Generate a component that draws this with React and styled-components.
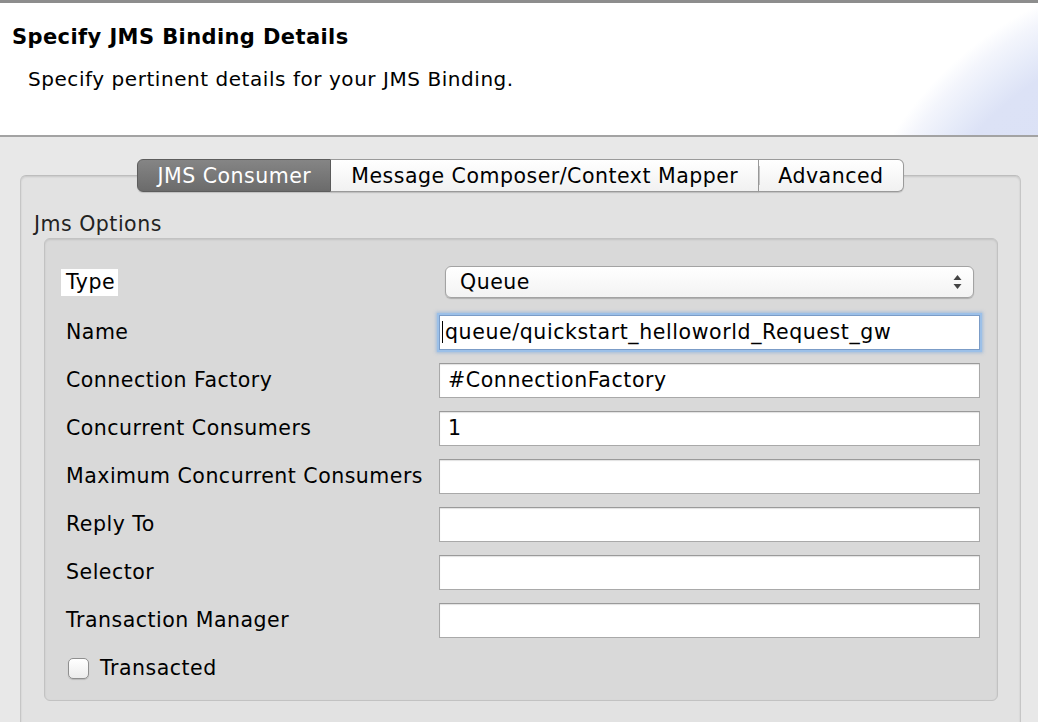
import React from 'react';
import styled, { createGlobalStyle } from 'styled-components';

const GlobalStyle = createGlobalStyle`
  html, body {
    margin: 0;
    padding: 0;
    background: #e8e8e8;
    font-family: "DejaVu Sans", "Liberation Sans", sans-serif;
    color: #000;
    overflow: hidden;
  }
`;

const Page = styled.div`
  width: 1038px;
  height: 722px;
  overflow: hidden;
`;

const Header = styled.div`
  height: 132px;
  border-top: 3px solid #8d8d8d;
  border-bottom: 2px solid #a3a3a3;
  background:
    radial-gradient(circle at 1200px 330px, #d9e0f5 0, #dce2f6 300px, #e6ebf9 322px, #f3f5fc 348px, #ffffff 366px);
  display: flex;
  flex-direction: column;
`;

const Title = styled.h1`
  margin: 0;
  padding: 21px 0 0 12px;
  font-size: 21px;
  letter-spacing: 0.4px;
  line-height: 26px;
  font-weight: bold;
`;

const Subtitle = styled.p`
  margin: 0;
  padding: 17px 0 0 28px;
  font-size: 20px;
  letter-spacing: 0.55px;
  line-height: 24px;
`;

const Body = styled.div`
  padding: 22px 17px 0 20px;
`;

const TabBar = styled.div`
  display: flex;
  justify-content: center;
  position: relative;
  z-index: 1;
  margin-bottom: -17px;
`;

const Tab = styled.div`
  height: 31px;
  padding: 0 ${p => (p.$wide ? '20px' : '19px')};
  display: flex;
  align-items: center;
  font-size: 20.5px;
  letter-spacing: 0.5px;
  border: 1px solid ${p => (p.$active ? '#5d5d5d' : '#9a9a9a')};
  border-left-width: ${p => (p.$first ? '1px' : '0')};
  color: ${p => (p.$active ? '#fff' : '#000')};
  background: ${p =>
    p.$active
      ? 'linear-gradient(#858585, #6b6b6b)'
      : 'linear-gradient(#ffffff, #f1f1f1)'};
  box-shadow: 0 1px 1px rgba(0, 0, 0, 0.15);
  border-radius: ${p => (p.$first ? '6px 0 0 6px' : p.$last ? '0 6px 6px 0' : '0')};
  position: relative;

  ${p =>
    p.$divider &&
    `&::before {
      content: '';
      position: absolute;
      left: 0;
      top: 6px;
      bottom: 6px;
      width: 1px;
      background: #c4c4c4;
    }`}
`;

const Folder = styled.div`
  background: #e2e2e2;
  border: 1px solid #c6c6c6;
  border-top-color: #bdbdbd;
  border-radius: 6px;
  box-shadow: inset 0 1px 2px rgba(0, 0, 0, 0.12);
  padding: 36px 22px 20px 23px;
  height: 600px;
`;

const GroupLabel = styled.div`
  font-size: 20.5px;
  letter-spacing: 0.5px;
  line-height: 24px;
  color: #222;
  margin-left: -10px;
  margin-bottom: 2px;
`;

const Group = styled.div`
  background: #d9d9d9;
  border: 1px solid #c2c2c2;
  border-radius: 6px;
  box-shadow: inset 0 1px 2px rgba(0, 0, 0, 0.1);
  padding: 19px 17px 8px 21px;
`;

const Row = styled.div`
  height: 48px;
  display: grid;
  grid-template-columns: 373px 1fr;
  align-items: center;
  margin-bottom: ${p => (p.$gap ? '2px' : '0')};
`;

const Label = styled.span`
  font-size: 20.5px;
  letter-spacing: 0.5px;
  line-height: 27px;
  justify-self: start;
  white-space: nowrap;
  margin-left: ${p => (p.$highlight ? '-5px' : '0')};
  padding: ${p => (p.$highlight ? '0 3px 0 5px' : '0')};
  background: ${p => (p.$highlight ? '#ffffff' : 'transparent')};
`;

const Select = styled.div`
  margin: 0 6px;
  height: 30px;
  border: 1px solid #a3a3a3;
  border-radius: 6px;
  background: linear-gradient(#ffffff, #f3f3f3);
  box-shadow: 0 1px 1px rgba(0, 0, 0, 0.2);
  display: flex;
  align-items: center;
  justify-content: space-between;
  padding: 0 11px 0 14px;
  font-size: 20.5px;
  letter-spacing: 0.5px;
`;

const Arrows = styled.svg`
  width: 9px;
  height: 14px;
`;

const Input = styled.div`
  height: 33px;
  background: #fff;
  border: 1px solid #a9a9a9;
  border-top-color: #9a9a9a;
  box-shadow: inset 0 1px 1px rgba(0, 0, 0, 0.12);
  display: flex;
  align-items: center;
  padding: 0 8px;
  font-size: 20.5px;
  letter-spacing: 0.6px;
  white-space: nowrap;
  ${p =>
    p.$focused &&
    `border-color: #7b9cc7;
     box-shadow: 0 0 0 2px #9cc0e8, 0 0 3px 3px rgba(110, 160, 220, 0.5);
     padding-left: 2px;`}
`;

const Caret = styled.span`
  display: inline-block;
  width: 1px;
  height: 22px;
  background: #000;
  margin-right: 2px;
`;

const CheckRow = styled.label`
  height: 48px;
  display: flex;
  align-items: center;
  gap: 11px;
  padding-left: 2px;
  font-size: 20.5px;
  letter-spacing: 0.5px;
`;

const Box = styled.span`
  width: 19px;
  height: 19px;
  border: 1px solid #8f8f8f;
  border-radius: 5px;
  background: linear-gradient(#ffffff, #ececec);
  box-shadow: 0 1px 1px rgba(0, 0, 0, 0.15);
`;

const fields = [
  { label: 'Name', value: 'queue/quickstart_helloworld_Request_gw', focused: true },
  { label: 'Connection Factory', value: '#ConnectionFactory' },
  { label: 'Concurrent Consumers', value: '1' },
  { label: 'Maximum Concurrent Consumers', value: '' },
  { label: 'Reply To', value: '' },
  { label: 'Selector', value: '' },
  { label: 'Transaction Manager', value: '' },
];

export default function App() {
  return (
    <>
      <GlobalStyle />
      <Page>
        <Header>
          <Title>Specify JMS Binding Details</Title>
          <Subtitle>Specify pertinent details for your JMS Binding.</Subtitle>
        </Header>
        <Body>
          <TabBar>
            <Tab $active $first>JMS Consumer</Tab>
            <Tab $wide>Message Composer/Context Mapper</Tab>
            <Tab $last $divider>Advanced</Tab>
          </TabBar>
          <Folder>
            <GroupLabel>Jms Options</GroupLabel>
            <Group>
              <Row $gap>
                <Label $highlight>Type</Label>
                <Select>
                  <span>Queue</span>
                  <Arrows viewBox="0 0 9 14">
                    <path d="M4.5 0 L8.5 5 L0.5 5 Z" fill="#444" />
                    <path d="M4.5 14 L8.5 9 L0.5 9 Z" fill="#444" />
                  </Arrows>
                </Select>
              </Row>
              {fields.map(f => (
                <Row key={f.label}>
                  <Label>{f.label}</Label>
                  <Input $focused={f.focused}>
                    {f.focused && <Caret />}
                    {f.value}
                  </Input>
                </Row>
              ))}
              <CheckRow>
                <Box />
                Transacted
              </CheckRow>
            </Group>
          </Folder>
        </Body>
      </Page>
    </>
  );
}
